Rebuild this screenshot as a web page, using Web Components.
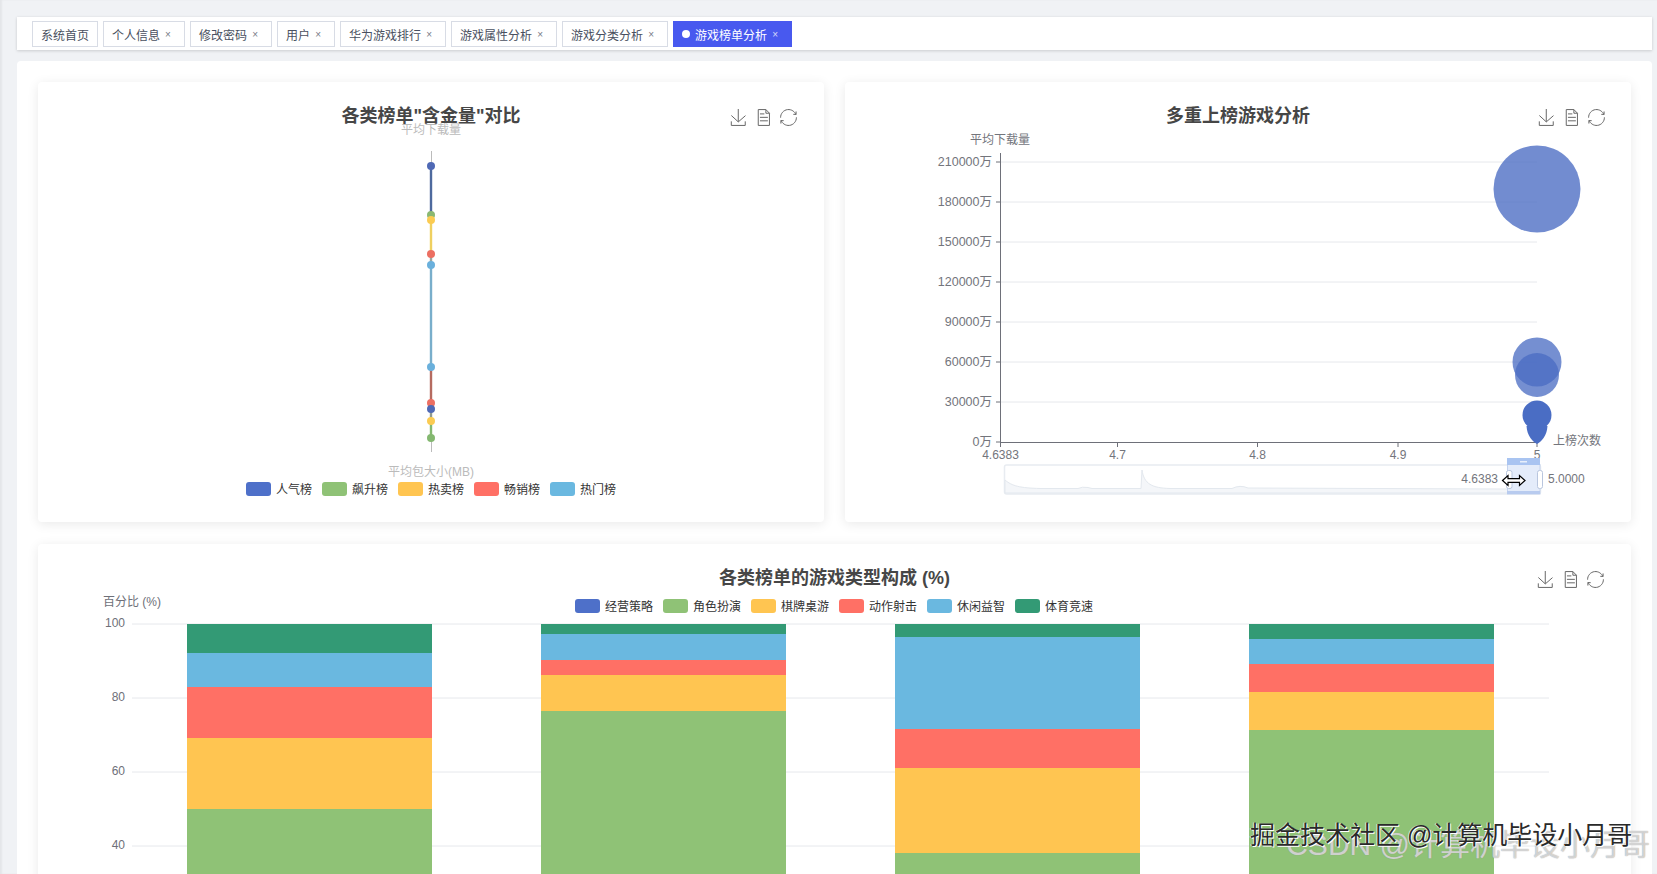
<!DOCTYPE html>
<html lang="zh">
<head>
<meta charset="utf-8">
<title>游戏榜单分析</title>
<style>
    html, body { margin: 0; height: 100%; overflow: hidden; }
    body {
        box-sizing: border-box;
        height: 874px;
        padding: 17px 5px 0 17px;
        background: #f0f2f5;
        box-shadow: inset 2px 0 2px rgba(0, 0, 0, .05);
        font-family: "Liberation Sans", "Noto Sans CJK SC", sans-serif;
        display: flex;
        flex-direction: column;
        gap: 11px;
    }
</style>
</head>
<body>
<tags-bar>
    <tag-item fixed>系统首页</tag-item>
    <tag-item>个人信息</tag-item>
    <tag-item>修改密码</tag-item>
    <tag-item>用户</tag-item>
    <tag-item>华为游戏排行</tag-item>
    <tag-item>游戏属性分析</tag-item>
    <tag-item>游戏分类分析</tag-item>
    <tag-item active>游戏榜单分析</tag-item>
</tags-bar>
<main-panel>
    <chart-card label="各类榜单&quot;含金量&quot;对比"><rank-scatter></rank-scatter></chart-card>
    <chart-card label="多重上榜游戏分析" style="--tools-right: 26px"><multi-bubble></multi-bubble></chart-card>
    <chart-card label="各类榜单的游戏类型构成 (%)" wide><type-stack></type-stack></chart-card>
</main-panel>
<water-mark></water-mark>

<script>
const COLORS = { blue: '#4e70c9', green: '#8fc276', yellow: '#ffc551', red: '#ff7065', sky: '#6ab8e0', teal: '#339a75' }

// 圖例，所有圖表共用，x 和 y 都是頁面座標
function legendSvg(items, x, y) {
    let out = ''
    for (const [name, color] of items) {
        out += `<rect x="${x}" y="${y - 7}" width="25" height="14" rx="3" fill="${color}"/>`
        out += `<text x="${x + 30}" y="${y + 1}" fill="#333" font-size="12" dominant-baseline="central">${name}</text>`
        x += 35 + name.length * 12 + 5
    }
    return out
}

class TagsBar extends HTMLElement {
    constructor() {
        super()
        this.attachShadow({ mode: 'open' })
        this.shadowRoot.innerHTML = `
            <style>
                :host {
                    display: flex;
                    flex: none;
                    gap: 5px;
                    box-sizing: border-box;
                    height: 33px;
                    padding: 4px 15px 3px;
                    background: #fff;
                    box-shadow: 0 1px 3px rgba(0, 0, 0, .14), 0 0 3px rgba(0, 0, 0, .04);
                }
            </style>
            <slot></slot>
        `
    }
}

class TagItem extends HTMLElement {
    constructor() {
        super()
        this.attachShadow({ mode: 'open' })
        const dot = this.hasAttribute('active') ? '<span class="dot"></span>' : ''
        const close = this.hasAttribute('fixed') ? '' : '<span class="close">×</span>'
        this.shadowRoot.innerHTML = `
            <style>
                :host {
                    display: flex;
                    align-items: center;
                    box-sizing: border-box;
                    height: 26px;
                    padding: 0 8px;
                    border: 1px solid #d8dce5;
                    background: #fff;
                    color: #495060;
                    font-size: 12px;
                }
                :host([active]) {
                    background: #4859ef;
                    border-color: #4859ef;
                    color: #fff;
                }
                .dot {
                    width: 8px;
                    height: 8px;
                    margin-right: 5px;
                    border-radius: 50%;
                    background: #fff;
                }
                .close {
                    width: 16px;
                    text-align: center;
                    font-size: 10px;
                    opacity: .75;
                }
            </style>
            ${dot}<slot></slot>${close}
        `
    }
}

class MainPanel extends HTMLElement {
    constructor() {
        super()
        this.attachShadow({ mode: 'open' })
        this.shadowRoot.innerHTML = `
            <style>
                :host {
                    display: grid;
                    flex: 1;
                    min-height: 0;
                    grid-template-columns: 786px 786px;
                    grid-template-rows: 440px 440px;
                    gap: 22px 21px;
                    padding: 21px 21px 0;
                    background: #fff;
                    border-radius: 4px 4px 0 0;
                    overflow: hidden;
                }
            </style>
            <slot></slot>
        `
    }
}

class ChartCard extends HTMLElement {
    constructor() {
        super()
        this.attachShadow({ mode: 'open' })
        this.shadowRoot.innerHTML = `
            <style>
                :host {
                    display: block;
                    position: relative;
                    background: #fff;
                    border-radius: 4px;
                    box-shadow: 0 2px 12px rgba(0, 0, 0, .09);
                }
                :host([wide]) { grid-column: 1 / -1; }
                h3 {
                    margin: 0;
                    padding-top: 23px;
                    height: 21px;
                    line-height: 22px;
                    text-align: center;
                    font-size: 18px;
                    font-weight: 700;
                    color: #464646;
                }
                .tools {
                    position: absolute;
                    top: 27px;
                    right: var(--tools-right, 27px);
                    display: flex;
                    gap: 8px;
                }
                svg { display: block; fill: none; stroke: #666; stroke-width: 3.5; }
            </style>
            <h3></h3>
            <div class="tools">
                <svg width="17" height="17" viewBox="0 0 60 60"><path d="M4.7,22.9L29.3,45.5L54.7,23.4M4.6,43.6L4.6,58L53.8,58L53.8,43.6M29.2,45.1L29.2,0"/></svg>
                <svg width="17" height="17" viewBox="0 0 60 60"><path d="M17.5,17.3H33 M45.4,29.5h-28 M11.5,2v56H51V14.8L38.4,2H11.5z M38.4,2.2v12.7H51 M45.4,41.7h-28"/></svg>
                <svg width="17" height="17" viewBox="0 0 60 60"><path d="M47,18.9h9.8V8.7 M56.3,20.1C52.1,9,40.5,0.6,26.8,2.1C12.6,3.7,1.6,16.2,2.1,30.6 M13,41.1H3.1v10.2 M3.7,39.9c4.2,11.1,15.8,19.5,29.5,18c14.2-1.6,25.2-14.1,24.7-28.5"/></svg>
            </div>
            <slot></slot>
        `
        this.shadowRoot.querySelector('h3').textContent = this.getAttribute('label')
    }
}

// 左上：散點圖，所有點都擠在同一條線上
class RankScatter extends HTMLElement {
    constructor() {
        super()
        this.attachShadow({ mode: 'open' })
        const lines = [
            [166, 215, '#4e6a9e'], [215, 220, '#8fc276'], [220, 254, '#efd060'], [254, 265, '#9aa6a0'],
            [265, 367, '#79aecb'], [367, 403, '#b56b60'], [403, 409, '#8a5f80'], [409, 421, '#8f9a90'], [421, 438, '#84b870']
        ]
        const points = [
            [166, '#4f69b5'], [215, '#8ab872'], [220, '#fbcb52'], [254, '#ec6f62'], [265, '#6ab0dc'],
            [367, '#6ab0dc'], [403, '#ec6f62'], [409, '#4f69b5'], [421, '#fbcb52'], [438, '#84b870']
        ]
        const legend = [['人气榜', COLORS.blue], ['飙升榜', COLORS.green], ['热卖榜', COLORS.yellow], ['畅销榜', COLORS.red], ['热门榜', COLORS.sky]]
        this.shadowRoot.innerHTML = `
            <style>
                :host { display: block; }
                svg { display: block; overflow: visible; }
            </style>
            <svg width="786" height="396" viewBox="38 126 786 396">
                <text x="431" y="130" fill="#bbb" font-size="12" text-anchor="middle" dominant-baseline="central">平均下载量</text>
                <line x1="431.5" y1="151" x2="431.5" y2="452" stroke="#bbb"/>
                ${lines.map(([a, b, c]) => `<line x1="431" y1="${a}" x2="431" y2="${b}" stroke="${c}" stroke-width="2.4"/>`).join('')}
                ${points.map(([y, c]) => `<circle cx="431" cy="${y}" r="4" fill="${c}"/>`).join('')}
                <text x="431" y="472" fill="#bbb" font-size="12" text-anchor="middle" dominant-baseline="central">平均包大小(MB)</text>
                ${legendSvg(legend, 246, 489)}
            </svg>
        `
    }
}

// 右上：氣泡圖加下方的 dataZoom
class MultiBubble extends HTMLElement {
    constructor() {
        super()
        this.attachShadow({ mode: 'open' })
        const yLabels = ['210000万', '180000万', '150000万', '120000万', '90000万', '60000万', '30000万', '0万']
        const xTicks = [[1000.5, '4.6383'], [1117.5, '4.7'], [1257.5, '4.8'], [1398, '4.9'], [1537, '5']]
        const text = 'fill="#73757c" font-size="12" dominant-baseline="central"'
        let grid = ''
        yLabels.forEach((label, i) => {
            const y = 162 + i * 40
            if (i < 7) grid += `<line x1="1001" y1="${y}" x2="1537" y2="${y}" stroke="#e6e8ec"/>`
            grid += `<line x1="996" y1="${y}" x2="1000" y2="${y}" stroke="#6e7079"/>`
            grid += `<text x="992" y="${y}" text-anchor="end" fill="#73757c" font-size="12.5" dominant-baseline="central">${label}</text>`
        })
        this.shadowRoot.innerHTML = `
            <style>
                :host { display: block; }
                svg { display: block; overflow: visible; }
            </style>
            <svg width="786" height="396" viewBox="845 126 786 396">
                <text x="1000" y="140" text-anchor="middle" ${text}>平均下载量</text>
                ${grid}
                <line x1="1000.5" y1="153" x2="1000.5" y2="442" stroke="#6e7079"/>
                <line x1="1000" y1="442.5" x2="1537" y2="442.5" stroke="#6e7079"/>
                ${xTicks.map(([x, l]) => `<line x1="${x}" y1="442" x2="${x}" y2="447" stroke="#6e7079"/><text x="${x}" y="455" text-anchor="middle" ${text}>${l}</text>`).join('')}
                <circle cx="1537" cy="189" r="43.5" fill="#4a6cc3" fill-opacity=".78"/>
                <circle cx="1537" cy="362" r="24.5" fill="#4a6cc3" fill-opacity=".76"/>
                <circle cx="1537" cy="375" r="22" fill="#4a6cc3" fill-opacity=".76"/>
                <g fill="#4a6dc4">
                    <circle cx="1537" cy="415" r="14.5"/>
                    <path d="M1526.5,426 C1527,436 1533,442 1537,444 C1541,442 1547,436 1547.5,426 Z"/>
                </g>
                <text x="1553" y="441" ${text}>上榜次数</text>

                <rect x="1004.5" y="465" width="536" height="29" rx="2" fill="#fff" stroke="#e8ecf1" stroke-width="1.5"/>
                <path d="M1005,480 C1012,486 1020,488 1040,488.5 L1078,488.5 Q1082,486.5 1088,487.5 L1092,488.5 L1141,488.5 L1142,470 C1144,484 1152,488 1170,488.5 L1232,488.5 Q1240,484.5 1248,488 L1508,489 L1508,493 L1005,493 Z" fill="#f4f6f9" stroke="#e3e8ee"/>
                <rect x="1507.5" y="464.5" width="32.5" height="29.5" fill="#e4ecfa" stroke="#c5d3ee"/>
                <rect x="1507" y="491" width="33" height="3" fill="#b8cbef"/>
                <rect x="1507" y="458" width="33" height="7" fill="#a9c4f1"/>
                <rect x="1520" y="461" width="7" height="1.5" fill="#e8effb"/>
                <rect x="1506.5" y="470.5" width="5.5" height="18" rx="2" fill="#fff" stroke="#b9c6de"/>
                <rect x="1537.5" y="470.5" width="5" height="18" rx="2" fill="#fff" stroke="#b9c6de"/>
                <text x="1498" y="479" text-anchor="end" ${text}>4.6383</text>
                <text x="1548" y="479" ${text}>5.0000</text>
                <path d="M1502.5,480.5 L1508,475.5 V478.6 H1519.5 V475.5 L1525,480.5 L1519.5,485.5 V482.4 H1508 V485.5 Z" fill="#fff" stroke="#000" stroke-width="1.2"/>
            </svg>
        `
    }
}

// 下方：百分比堆疊柱狀圖，高度超出視窗，底部被裁切
class TypeStack extends HTMLElement {
    constructor() {
        super()
        this.attachShadow({ mode: 'open' })
        const { blue, green, yellow, red, sky, teal } = COLORS
        const legend = [['经营策略', blue], ['角色扮演', green], ['棋牌桌游', yellow], ['动作射击', red], ['休闲益智', sky], ['体育竞速', teal]]
        const bars = [
            [187, [624, 653, 687, 738, 809]],
            [541, [624, 634, 660, 675, 711]],
            [895, [624, 637, 729, 768, 853]],
            [1249, [624, 639, 664, 692, 730]]
        ]
        const fills = [teal, sky, red, yellow, green]
        let rects = ''
        for (const [x, tops] of bars) {
            tops.forEach((top, i) => {
                const end = i < 4 ? tops[i + 1] : 900
                rects += `<rect x="${x}" y="${top}" width="245" height="${end - top}" fill="${fills[i]}"/>`
            })
        }
        const ticks = [[624, 100], [698, 80], [772, 60], [846, 40]]
        const text = 'fill="#6e7079" font-size="12" dominant-baseline="central"'
        this.shadowRoot.innerHTML = `
            <style>
                :host { display: block; }
                svg { display: block; overflow: visible; }
            </style>
            <svg width="1593" height="352" viewBox="38 588 1593 352">
                <text x="132" y="602" text-anchor="middle" ${text}>百分比 (%)</text>
                ${legendSvg(legend, 575, 606)}
                ${ticks.map(([y, l]) => `<line x1="132" y1="${y}" x2="1549" y2="${y}" stroke="#e6e8ec"/><text x="125" y="${y - 1}" text-anchor="end" ${text}>${l}</text>`).join('')}
                ${rects}
            </svg>
        `
    }
}

// 右下角兩層疊在一起的水印
class WaterMark extends HTMLElement {
    constructor() {
        super()
        this.attachShadow({ mode: 'open' })
        this.shadowRoot.innerHTML = `
            <style>
                :host {
                    position: absolute;
                    left: 1250px;
                    top: 818px;
                    width: 407px;
                    height: 56px;
                    pointer-events: none;
                    white-space: nowrap;
                }
                span { position: absolute; line-height: 1; }
                .back {
                    right: 7px;
                    top: 12px;
                    font-size: 30px;
                    color: rgba(255, 255, 255, .6);
                    text-shadow: 0 0 1px #8a8a8a;
                }
                .front {
                    left: 0;
                    top: 5px;
                    font-size: 25px;
                    color: #2a2a2a;
                    text-shadow: 1px 1px 0 #fff, -1px 0 0 rgba(255, 255, 255, .7);
                }
            </style>
            <span class="back">CSDN @计算机毕设小月哥</span>
            <span class="front">掘金技术社区 @计算机毕设小月哥</span>
        `
    }
}

customElements.define('tags-bar', TagsBar)
customElements.define('tag-item', TagItem)
customElements.define('main-panel', MainPanel)
customElements.define('chart-card', ChartCard)
customElements.define('rank-scatter', RankScatter)
customElements.define('multi-bubble', MultiBubble)
customElements.define('type-stack', TypeStack)
customElements.define('water-mark', WaterMark)
</script>
</body>
</html>
